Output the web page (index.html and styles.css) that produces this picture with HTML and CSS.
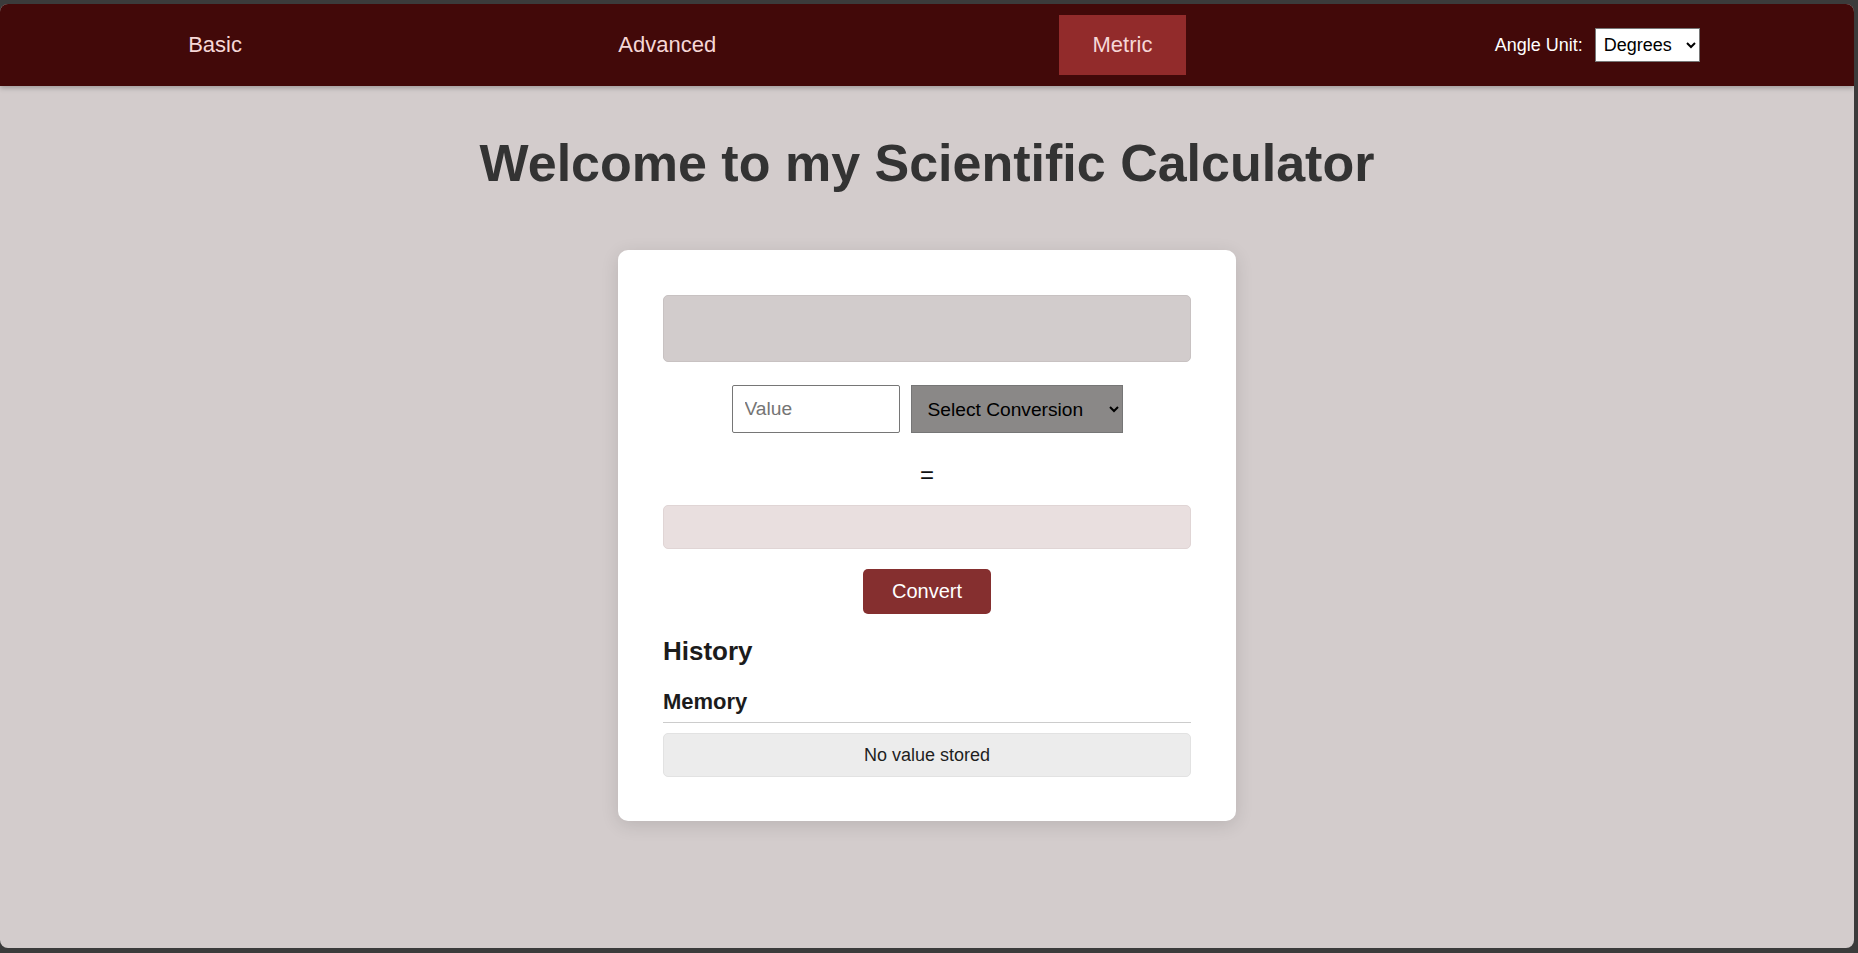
FILE: index.html
```html
<!DOCTYPE html>
<html lang="en">
<head>
<meta charset="utf-8">
<title>Scientific Calculator</title>
<link rel="stylesheet" href="styles.css">
</head>
<body>
<div class="window">
  <nav class="topnav">
    <a class="nav-link" href="#">Basic</a>
    <a class="nav-link" href="#">Advanced</a>
    <a class="nav-link active" href="#">Metric</a>
    <div class="angle-unit">
      <label class="angle-label" for="angle">Angle Unit:</label>
      <select id="angle" class="angle-select">
        <option>Degrees</option>
        <option>Radians</option>
      </select>
    </div>
  </nav>
  <main class="page">
    <h1 class="title">Welcome to my Scientific Calculator</h1>
    <section class="card">
      <div class="display"></div>
      <div class="convert-row">
        <input class="value-input" type="text" placeholder="Value">
        <select class="conv-select">
          <option>Select Conversion</option>
          <option>cm to inches</option>
          <option>km to miles</option>
        </select>
      </div>
      <div class="equals">=</div>
      <div class="result"></div>
      <div class="btn-row"><button class="convert-btn">Convert</button></div>
      <h2 class="history-title">History</h2>
      <h3 class="memory-title">Memory</h3>
      <div class="memory-box">No value stored</div>
    </section>
  </main>
</div>
</body>
</html>
```

FILE: styles.css
```css
html, body {
  margin: 0;
  padding: 0;
  height: 100%;
}

body {
  background: #3b3b3b;
  font-family: "Liberation Sans", Arial, sans-serif;
  overflow: hidden;
}

.window {
  margin: 4px 4px 5px 0;
  height: 944px;
  border-radius: 8px;
  overflow: hidden;
  background: #d3cccc;
  display: flex;
  flex-direction: column;
}

.topnav {
  height: 82px;
  flex: none;
  background: #420909;
  display: flex;
  align-items: center;
  justify-content: space-around;
  box-shadow: 0 2px 5px rgba(0, 0, 0, 0.25);
  position: relative;
  z-index: 1;
}

.nav-link {
  display: block;
  padding: 0 34px;
  height: 60px;
  line-height: 60px;
  font-size: 22px;
  color: #f6d7d7;
  text-decoration: none;
}

.nav-link.active {
  background: #922b2b;
}

.angle-unit {
  display: flex;
  align-items: center;
}

.angle-label {
  font-size: 18px;
  color: #ffffff;
  margin-right: 12px;
}

.angle-select {
  font-family: "Liberation Sans", Arial, sans-serif;
  font-size: 18px;
  height: 34px;
  width: 105px;
  padding: 0 4px;
  background: #ffffff;
  color: #000;
  border: 1px solid #767676;
  border-radius: 0;
}

.page {
  flex: 1;
  display: flex;
  flex-direction: column;
  align-items: center;
}

.title {
  margin: 47px 0 0;
  font-size: 52px;
  line-height: 60px;
  font-weight: bold;
  color: #333333;
  text-align: center;
}

.card {
  margin-top: 57px;
  width: 618px;
  box-sizing: border-box;
  padding: 45px 45px 44px;
  background: #ffffff;
  border-radius: 10px;
  box-shadow: 0 4px 18px rgba(0, 0, 0, 0.12);
  display: flex;
  flex-direction: column;
}

.display {
  height: 67px;
  box-sizing: border-box;
  background: #d2cccc;
  border: 1px solid #c8c2c2;
  border-radius: 5px;
}

.convert-row {
  margin-top: 23px;
  display: flex;
  justify-content: center;
  gap: 11px;
}

.value-input {
  width: 168px;
  height: 48px;
  box-sizing: border-box;
  padding: 0 12px;
  font-family: "Liberation Sans", Arial, sans-serif;
  font-size: 19.2px;
  border: 1px solid #767676;
  border-radius: 2px;
  background: #fff;
}

.value-input::placeholder {
  color: #757575;
}

.conv-select {
  width: 212px;
  height: 48px;
  box-sizing: border-box;
  padding: 0 8px 0 12px;
  font-family: "Liberation Sans", Arial, sans-serif;
  font-size: 19.2px;
  color: #000;
  background: #8a8887;
  border: 1px solid #767676;
  border-radius: 0;
}

.equals {
  margin-top: 28px;
  height: 28px;
  line-height: 28px;
  font-size: 24px;
  text-align: center;
  color: #111;
}

.result {
  margin-top: 16px;
  height: 44px;
  box-sizing: border-box;
  background: #e9dfdf;
  border: 1px solid #e0d5d5;
  border-radius: 5px;
}

.btn-row {
  margin-top: 20px;
  display: flex;
  justify-content: center;
}

.convert-btn {
  width: 128px;
  height: 45px;
  font-family: "Liberation Sans", Arial, sans-serif;
  font-size: 20px;
  color: #ffffff;
  background: #852f2f;
  border: none;
  border-radius: 5px;
  padding: 0;
}

.history-title {
  margin: 22px 0 0;
  font-size: 26px;
  line-height: 30px;
  font-weight: bold;
  color: #1c1c1c;
}

.memory-title {
  margin: 23px 0 0;
  padding-bottom: 8px;
  font-size: 22px;
  line-height: 25px;
  font-weight: bold;
  color: #1c1c1c;
  border-bottom: 1px solid #cccccc;
}

.memory-box {
  margin-top: 10px;
  height: 44px;
  box-sizing: border-box;
  display: flex;
  align-items: center;
  justify-content: center;
  font-size: 18px;
  color: #1e1e1e;
  background: #ececec;
  border: 1px solid #e2e2e2;
  border-radius: 5px;
}
```
